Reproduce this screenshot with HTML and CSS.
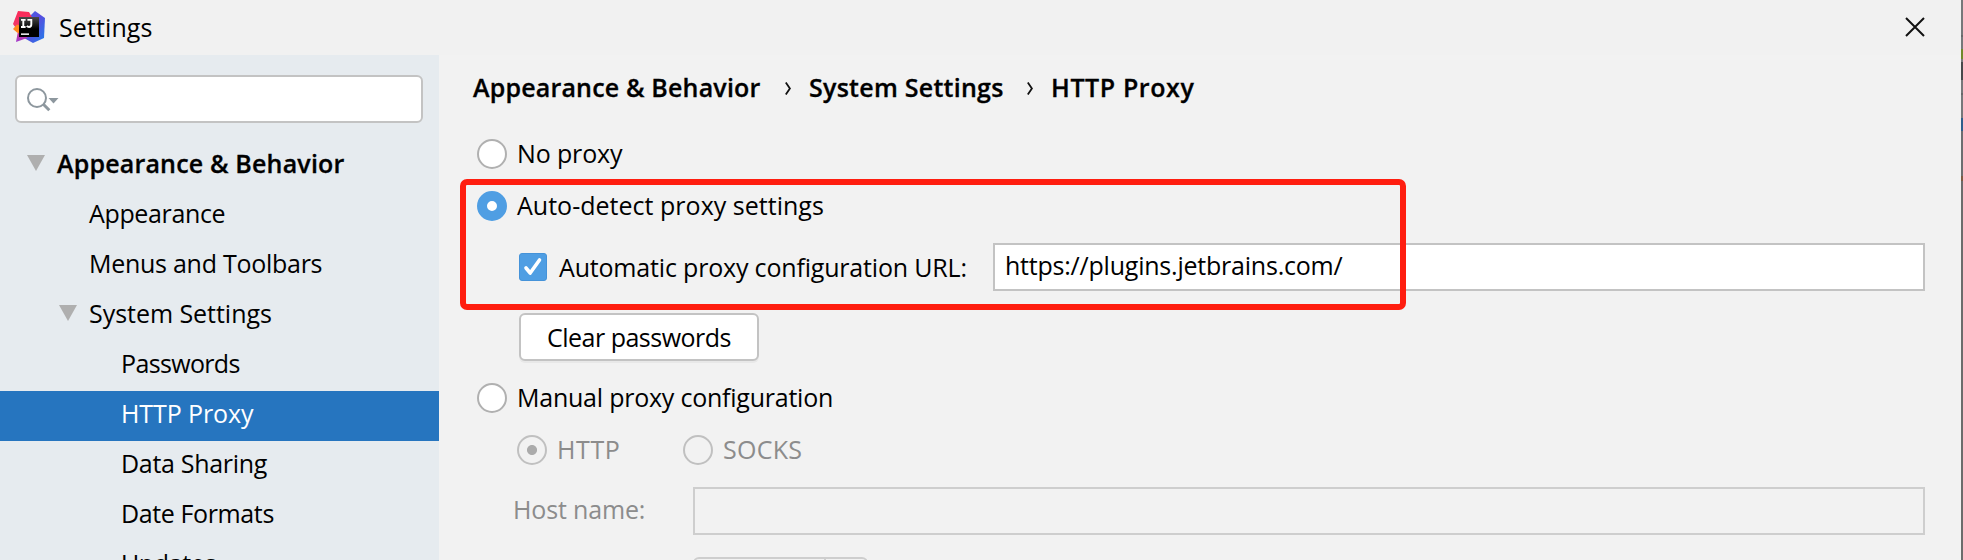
FILE: index.html
```html
<!DOCTYPE html>
<html lang="en">
<head>
<meta charset="utf-8">
<title>Settings</title>
<link rel="stylesheet" href="styles.css">
</head>
<body>
<div class="window">
  <header class="titlebar">
    <svg class="logo" viewBox="0 0 32 32">
      <defs>
        <linearGradient id="blue" x1="0" y1="0" x2="1" y2="1"><stop offset="0" stop-color="#3a70e4"/><stop offset=".45" stop-color="#5a4ade"/><stop offset="1" stop-color="#1e80ea"/></linearGradient>
        <linearGradient id="pink" x1="0" y1="0" x2="0" y2="1"><stop offset="0" stop-color="#fb2a58"/><stop offset=".5" stop-color="#f0386a"/><stop offset="1" stop-color="#a03bd0"/></linearGradient>
        <linearGradient id="tile" x1="0" y1="0" x2="0" y2="1"><stop offset="0" stop-color="#4a4a4a"/><stop offset=".6" stop-color="#000"/></linearGradient>
      </defs>
      <path fill="url(#blue)" d="M17 5 22 0 32 7 31 27 20 32 11 27Z"/>
      <path fill="url(#pink)" d="M5 0 16 1 20 8 14 27 3 31 5 20 0 13Z"/>
      <path fill="#ff8a1e" d="M0 18 4 13.5 10 16 8 23 4 21.5Z"/>
      <path fill="url(#tile)" d="M6 6H26V26H6Z"/>
      <path fill="none" stroke="#fff" stroke-width="1.9" d="M8 8.9H12.6M10.3 8.9V16M8 16H12.6M14.4 8.9H18.3V13.6Q18.3 16 16 16 14.6 16 13.8 14.9"/>
      <path fill="#fff" d="M8 22.4H16V23.9H8Z"/>
    </svg>
    <h1 class="title">Settings</h1>
    <svg class="close" viewBox="0 0 20 20"><path d="M1 1 19 19M19 1 1 19"/></svg>
  </header>

  <div class="body">
    <nav class="sidebar">
      <div class="search">
        <svg class="search-icon" viewBox="0 0 34 26"><circle cx="11" cy="11" r="9"/><path class="handle" d="M17.3 17.3 23.3 23.3"/><path class="caret" d="M22.5 11H32.5L27.5 16.5Z"/></svg>
      </div>
      <ul class="tree">
        <li class="node root"><svg class="arrow" viewBox="0 0 18 16"><path d="M0 0H18L9 16Z"/></svg><span class="t-root">Appearance &amp; Behavior</span></li>
        <li class="node mid t-appearance">Appearance</li>
        <li class="node mid t-menus">Menus and Toolbars</li>
        <li class="node group"><svg class="arrow" viewBox="0 0 18 16"><path d="M0 0H18L9 16Z"/></svg><span class="t-system">System Settings</span></li>
        <li class="node leaf t-pass">Passwords</li>
        <li class="node leaf selected t-proxy">HTTP Proxy</li>
        <li class="node leaf t-sharing">Data Sharing</li>
        <li class="node leaf t-formats">Date Formats</li>
        <li class="node leaf t-formats">Updates</li>
      </ul>
    </nav>

    <main class="content">
      <div class="crumbs">
        <span class="c-root">Appearance &amp; Behavior</span>
        <svg class="chevron" viewBox="0 0 6 13"><path d="M.8.6 4.9 6.5.8 12.4"/></svg>
        <span class="c-system">System Settings</span>
        <svg class="chevron" viewBox="0 0 6 13"><path d="M.8.6 4.9 6.5.8 12.4"/></svg>
        <span class="c-proxy">HTTP Proxy</span>
      </div>

      <label class="option"><i class="radio"></i><span class="t-none">No proxy</span></label>

      <label class="option auto"><i class="radio on"></i><span class="t-auto">Auto-detect proxy settings</span></label>
      <div class="url-row">
        <svg class="check" viewBox="0 0 28 28"><rect x=".5" y=".5" width="27" height="27" rx="2.5"/><path d="M7 15 11.2 20 20.5 7"/></svg>
        <span class="t-url">Automatic proxy configuration URL:</span>
        <div class="field t-value">https://plugins.jetbrains.com/</div>
      </div>
      <button class="button">Clear passwords</button>

      <label class="option manual"><i class="radio"></i><span class="t-manual">Manual proxy configuration</span></label>
      <div class="protocols">
        <label class="option off http"><i class="radio picked"></i><span class="t-http">HTTP</span></label>
        <label class="option off"><i class="radio"></i><span class="t-socks">SOCKS</span></label>
      </div>
      <div class="host-row">
        <span class="host-label">Host name:</span>
        <div class="field disabled"></div>
      </div>
      <div class="spinner"><div class="spinner-value"></div></div>
      <div class="highlight"></div>
    </main>
  </div>
</div>
</body>
</html>
```
FILE: styles.css
```css
* { box-sizing: border-box; }
body {
  margin: 0;
  height: 560px;
  overflow: hidden;
  background: linear-gradient(#76787a 0 35px, #66686a 35px 37px, #76787a 37px 49px, #70892c 49px 59px, #76787a 59px 62px, #47494b 62px 80px, #76787a 80px 93px, #66686a 93px 95px, #76787a 95px 118px, #2f5f8c 118px 131px, #6c6e70 131px 176px, #7d5a42 176px 181px, #6c6c6c 181px);
  font: 25px/30px "Open Sans", "Noto Sans", sans-serif;
  color: #000;
}
.window {
  display: flex;
  flex-direction: column;
  width: 1961px;
  height: 560px;
  overflow: hidden;
  background: #f2f2f2;
  white-space: nowrap;
}

/* Title bar */
.titlebar {
  display: flex;
  flex: none;
  align-items: center;
  height: 55px;
  padding: 0 36px 1px 13px;
  background: #f1f1f1;
}
.logo { width: 32px; height: 32px; }
.title {
  margin: 0 0 0 14px;
  font: inherit;
  letter-spacing: .1px;
}
.close { width: 20px; height: 20px; margin-left: auto; }
.close path { fill: none; stroke: #111; stroke-width: 2; }

.body { display: flex; flex: 1; min-height: 0; }

/* Sidebar */
.sidebar {
  flex: none;
  width: 439px;
  padding-top: 20px;
  background: #e6ebef;
  overflow: hidden;
}
.search {
  width: 408px;
  height: 48px;
  margin-left: 15px;
  padding: 10px 0 0 9px;
  border: 2px solid #c3c3c3;
  border-radius: 6px;
  background: #fff;
}
.search-icon { display: block; width: 34px; height: 26px; }
.search-icon circle { fill: none; stroke: #8d979e; stroke-width: 2; }
.search-icon .handle { fill: none; stroke: #8d979e; stroke-width: 3; }
.search-icon .caret { fill: #8d979e; }
.tree { margin: 18px 0 0; padding: 0; list-style: none; }
.node {
  display: flex;
  align-items: center;
  height: 50px;
  padding-bottom: 7px;
}
.root { padding-left: 27px; font-weight: 600; -webkit-text-stroke: .3px; }
.group { padding-left: 59px; }
.mid { padding-left: 89px; }
.leaf { padding-left: 121px; }
.arrow { width: 18px; height: 16px; margin-right: 12px; fill: #afafaf; }
.selected { background: #2675bf; color: #fff; }
.t-root { letter-spacing: .18px; }
.t-appearance { letter-spacing: -.36px; }
.t-menus { letter-spacing: -.27px; }
.t-system { letter-spacing: -.04px; }
.t-pass { letter-spacing: -.65px; }
.t-proxy { letter-spacing: -.1px; }
.t-sharing { letter-spacing: -.3px; }
.t-formats { letter-spacing: -.38px; }

/* Settings page */
.content { position: relative; flex: 1; padding: 17px 36px 0 38px; }
.crumbs {
  display: flex;
  align-items: center;
  height: 30px;
  margin-left: -4px;
  font-weight: 600;
  -webkit-text-stroke: .3px;
}
.chevron { width: 6px; height: 13px; margin-top: 2px; fill: none; stroke: #111; stroke-width: 1.8; }
.c-root { width: 312px; letter-spacing: .18px; }
.c-system { width: 218px; margin-left: 18px; letter-spacing: .26px; }
.c-proxy { margin-left: 18px; letter-spacing: .6px; }

.option { display: flex; align-items: center; gap: 10px; height: 30px; margin-top: 22px; }
.crumbs + .option { margin-top: 37px; }
.option > span { margin-top: -3px; }
.radio {
  flex: none;
  width: 30px;
  height: 30px;
  border: 2px solid #b0b0b0;
  border-radius: 50%;
  background: #fff;
}
.on { border: 10px solid #4f9ee3; }
.off { margin-top: 0; color: #8c8c8c; }
.off .radio { border-color: #c0c0c0; background: transparent; }
.off .picked { background: radial-gradient(circle, #ababab 4.6px, transparent 5.4px); }
.t-none { letter-spacing: -.14px; }
.t-auto { letter-spacing: .02px; }
.t-manual { letter-spacing: -.23px; }
.t-http { letter-spacing: .6px; }
.t-socks { letter-spacing: .28px; }

.url-row { display: flex; align-items: center; height: 48px; margin: 22px 0 0 42px; }
.check { flex: none; width: 28px; height: 28px; }
.check rect { fill: #4f9ee3; stroke: #4593d9; }
.check path { fill: none; stroke: #fff; stroke-width: 3.6; stroke-linecap: round; stroke-linejoin: round; }
.t-url { width: 434px; margin-left: 12px; letter-spacing: -.18px; }
.field {
  flex: 1;
  height: 48px;
  padding: 5px 0 0 10px;
  border: 2px solid #c3c3c3;
  background: #fff;
}
.t-value { letter-spacing: -.22px; }
.button {
  display: block;
  width: 240px;
  height: 48px;
  margin: 22px 0 0 42px;
  padding: 0 0 1px;
  border: 2px solid #c3c3c3;
  border-radius: 6px;
  background: #fff;
  box-shadow: 0 2px 0 #e8e8e8;
  font: inherit;
  letter-spacing: -.51px;
  color: #000;
}
.protocols { display: flex; margin: 22px 0 0 40px; }
.http { width: 166px; }
.host-row { display: flex; align-items: center; margin: 22px 0 0 36px; }
.host-label { width: 180px; margin-top: -4px; letter-spacing: -.15px; color: #8c8c8c; }
.disabled { border-color: #cecece; background: transparent; }
.spinner {
  width: 175px;
  height: 48px;
  margin: 22px 0 0 216px;
  border: 2px solid #cecece;
  border-radius: 6px;
}
.spinner-value { width: 131px; height: 44px; border-right: 2px solid #cecece; }

/* Red annotation frame laid over the form */
.highlight {
  position: absolute;
  left: 21px;
  top: 124px;
  width: 946px;
  height: 131px;
  border: 6px solid #ff1e10;
  border-radius: 7px;
}
```
